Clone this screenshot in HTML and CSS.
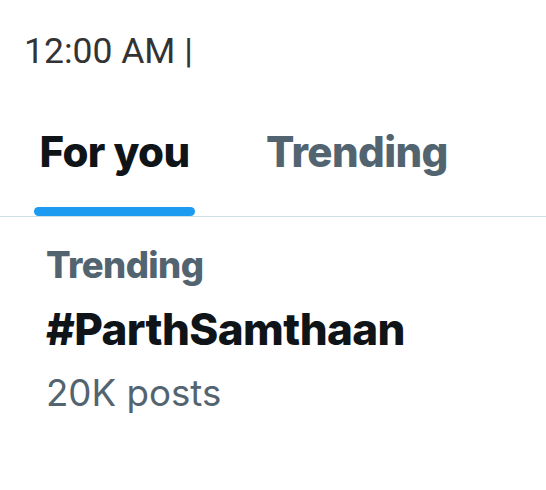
FILE: index.html
```html
<!DOCTYPE html>
<html>
<head>
<meta charset="utf-8">
<link rel="stylesheet" href="styles.css">
</head>
<body>
<div class="page">
  <div class="status">12:00 AM |</div>
  <div class="tabs">
    <div class="tab active"><span class="label">For you</span><span class="bar"></span></div>
    <div class="tab"><span class="label">Trending</span></div>
  </div>
  <div class="trend">
    <div class="cat">Trending</div>
    <div class="tag">#ParthSamthaan</div>
    <div class="count">20K posts</div>
  </div>
</div>
</body>
</html>
```
FILE: styles.css
```css
html, body { margin: 0; padding: 0; background: #fff; }
.page { width: 546px; height: 490px; overflow: hidden; font-family: Inter, "Noto Sans", sans-serif; }
.status { font-family: Roboto, sans-serif; font-size: 35.5px; color: #333; padding: 31px 0 0 24px; line-height: 40px; height: 40px; }
.tabs { display: flex; border-bottom: 1px solid #cfe0e3; margin-top: 57px; }
.tab { display: flex; flex-direction: column; align-items: center; }
.tab.active { margin-left: 34px; width: 161px; }
.tab + .tab { margin-left: 71px; }
.label { font-size: 42px; font-weight: 800; letter-spacing: -0.6px; line-height: 48px; color: #536471; }
.active .label { color: #0f1419; }
.bar { display: block; width: 161px; height: 9px; border-radius: 5px; background: #1d9bf0; margin-top: 31px; }
.trend { padding: 26px 0 0 46px; }
.cat { font-size: 36.5px; font-weight: 800; color: #536471; line-height: 44px; letter-spacing: -0.6px; }
.tag { font-size: 44px; font-weight: 800; color: #0f1419; line-height: 54px; margin-top: 15px; letter-spacing: -0.6px; }
.count { font-size: 36.7px; color: #536471; line-height: 42px; margin-top: 16px; }
```
